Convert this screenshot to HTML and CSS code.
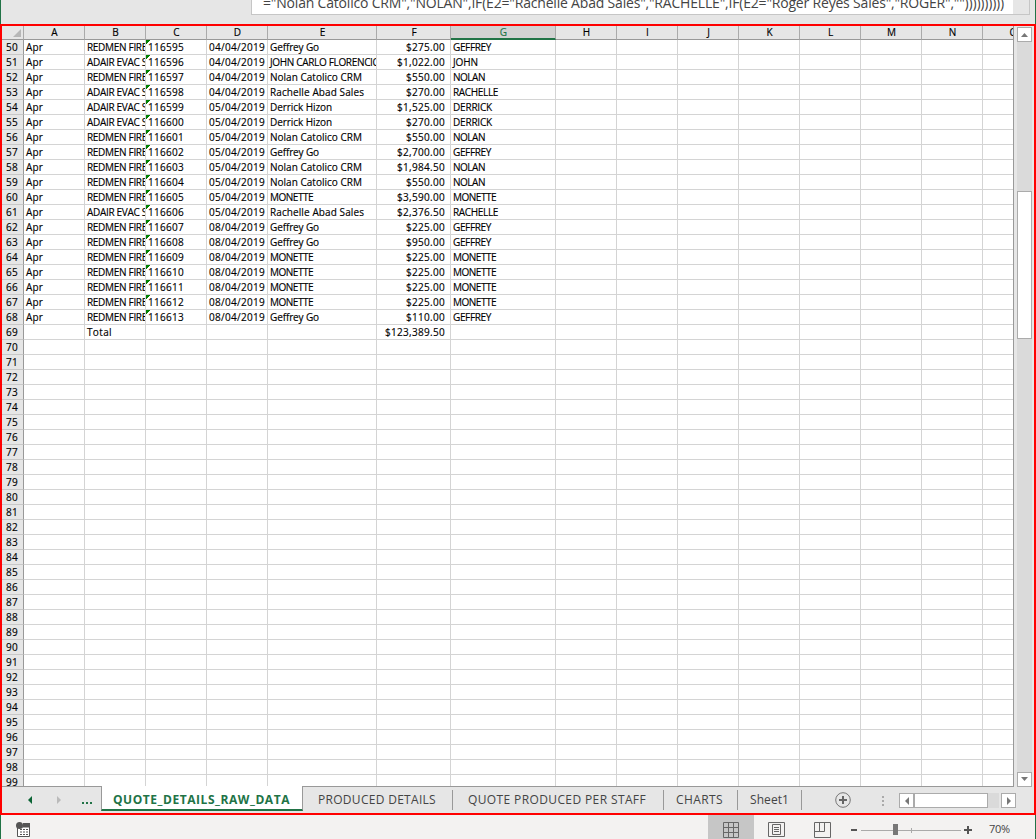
FILE: index.html
```html
<!DOCTYPE html>
<html lang="en">
<head>
<meta charset="utf-8">
<title>Quote details</title>
<link rel="stylesheet" href="styles.css">
</head>
<body>
<div class="app">
  <header class="formula-area"><div class="formula-box"><div class="formula-input"><span class="formula-text" data-w="741">="Nolan Catolico CRM","NOLAN",IF(E2="Rachelle Abad Sales","RACHELLE",IF(E2="Roger Reyes Sales","ROGER",""))))))))))</span></div></div></header>
  <main class="workbook">
    <div class="sheet-area">
      <div class="sheet">
        <div class="row head" id="head"></div>
        <div class="rows" id="rows"></div>
      </div>
      <div class="vscroll">
        <div class="arrow"><svg width="9" height="5"><path d="M1 5L4.500 1L8 5z"/></svg></div>
        <div class="vtrack"><div class="vthumb"></div></div>
        <div class="arrow"><svg width="9" height="5"><path d="M1 0L4.500 4L8 0z"/></svg></div>
      </div>
    </div>
    <nav class="tabs">
      <div class="tabnav">
        <svg width="99" height="26"><path d="M26 13l4-4v8z" fill="#0b6434"/><path d="M59 13l-4-4v8z" fill="#bababa"/><path d="M80 15h2v2h-2zM84 15h2v2h-2zM88 15h2v2h-2z" fill="#217346"/></svg>
      </div>
      <div class="tab active"><span data-w="177">QUOTE_DETAILS_RAW_DATA</span></div>
      <div class="tab t2"><span data-w="118">PRODUCED DETAILS</span></div>
      <div class="tab t3"><span data-w="178">QUOTE PRODUCED PER STAFF</span></div>
      <div class="tab t4"><span data-w="47">CHARTS</span></div>
      <div class="tab t5"><span data-w="39">Sheet1</span></div>
      <div class="tab-tools">
        <svg class="add" width="16" height="16"><circle cx="8" cy="8" r="7.300" fill="none" stroke="#777"/><path d="M8 4v8M4 8h8" stroke="#666" stroke-width="2"/></svg>
        <svg class="dots" width="2" height="10" fill="#aaa"><path d="M0 0h2v2H0zM0 4h2v2H0zM0 8h2v2H0z"/></svg>
        <div class="hscroll"><div class="arrow"><svg width="4" height="8"><path d="M4 0L0 4L4 8z"/></svg></div><div class="hthumb"></div><div class="htrack"></div><div class="arrow"><svg width="4" height="8"><path d="M0 0L4 4L0 8z"/></svg></div></div>
      </div>
    </nav>
  </main>
  <footer class="status">
    <svg class="macro" width="16" height="16"><path d="M1.500 5v9.500h12V5z" fill="#fff" stroke="#555"/><path d="M7 1h7v4H7z" fill="#555"/><circle cx="3.500" cy="3.500" r="3.500" fill="#555"/><path d="M4 7.500h9M4 10h9M4 12.500h9" stroke="#555" stroke-dasharray="2 1"/></svg>
    <div class="view selected"><svg width="16" height="16"><path d="M.500.500h15v15H.500zM5.500 0v16M10.500 0v16M0 5.500h16M0 10.500h16" fill="none" stroke="#666"/></svg></div>
    <div class="view"><svg width="17" height="16"><path d="M.500.500h16v14H.500zM4.500 2.500h8v10h-8zM6 5.500h5M6 7.500h5M6 9.500h5" fill="none" stroke="#666"/></svg></div>
    <div class="view"><svg width="17" height="16"><path d="M.500.500h16v15H.500zM.500 9.500h10V0M5.500 0v9" fill="none" stroke="#666"/></svg></div>
    <svg class="zoom" width="124" height="12"><path d="M0 6h6M113 6h8M117 2v8" stroke="#555" stroke-width="2"/><path d="M10 6.500h100M60.500 4v5" stroke="#aaa"/><path d="M42 0h5v11h-5z" fill="#777"/></svg>
    <span class="percent" data-w="21">70%</span>
  </footer>
</div>
<script src="sheet.js"></script>
</body>
</html>
```
FILE: styles.css
```css
* { box-sizing: border-box; }
body { margin: 0; font-family: "Open Sans", "Noto Sans", sans-serif; }
svg { display: block; flex: none; }
.app { width: 1036px; height: 839px; display: flex; flex-direction: column; overflow: hidden; background: #e6e6e6; }
.formula-area { height: 24px; flex: none; border-left: 1px solid #217346; border-right: 1px solid #217346; padding: 0 5px 0 250px; }
.formula-box { height: 15px; border: 1px solid #c6c6c6; border-top: 0; padding-right: 16px; }
.formula-input { height: 14px; background: #fff; overflow: hidden; display: flex; align-items: flex-end; padding-left: 11px; }
.formula-text { font: 14px/20px "Open Sans", sans-serif; color: #444; white-space: nowrap; margin-bottom: 1px; }
.workbook { height: 791px; flex: none; border: 2px solid #f00; display: flex; flex-direction: column; }
.sheet-area { height: 760px; flex: none; display: flex; }
.sheet { width: 1012px; background: #fff; border-right: 1px solid #999; overflow: hidden; }
.row { display: grid; grid-template-columns: 22px 61px 61px 61px 61px 109px 74px 105px repeat(8, 61px); height: 15px; font-size: 10px; line-height: 15px; color: #000; -webkit-text-stroke: 0.15px; }
.cell { border-right: 1px solid #d4d4d4; border-bottom: 1px solid #d4d4d4; padding-left: 2px; overflow: hidden; white-space: nowrap; height: 15px; }
.cell span, .tab span { display: inline-block; }
.right { text-align: right; padding: 0 2px 0 0; }
.money { padding-right: 5px; }
.flag { background: linear-gradient(135deg, #008000 3px, transparent 3.500px) no-repeat; }
.head { height: 14px; }
.head .cell { height: 14px; line-height: 12px; background: #e6e6e6; border-color: #aaa; border-bottom-color: #999; text-align: center; padding: 0 0 0 1px; }
.head .selected-column { background: #d2d2d2; color: #217346; border-bottom: 2px solid #217346; }
.corner svg { margin: 3px 0 0 10px; fill: #b7b7b7; }
.row .number { background: #e6e6e6; border-right-color: #999; border-bottom-color: #c8c8c8; text-align: center; padding: 0 1px 0 0; }
.vscroll { width: 20px; display: flex; flex-direction: column; align-items: flex-end; padding: 1px 2px 0 0; }
.arrow { width: 15px; height: 15px; flex: none; border: 1px solid #ababab; background: #fff; display: flex; align-items: center; justify-content: center; fill: #777; }
.vtrack { width: 15px; height: 730px; flex: none; background: #dadada; padding-top: 149px; }
.vthumb { height: 148px; background: #fff; border: 1px solid #ababab; }
.tabs { height: 27px; display: flex; flex: none; background: linear-gradient(#999, #999) 0 0 / 1012px 1px no-repeat; padding-top: 1px; }
.tabnav { width: 99px; flex: none; }
.tab { height: 20px; margin-top: 3px; border-right: 1px solid #999; font-size: 12px; line-height: 19px; color: #444; white-space: nowrap; flex: none; }
.tab.active { width: 202px; height: 25px; margin-top: -1px; padding: 4px 0 0 11px; background: #fff; border-left: 1px solid #999; border-bottom: 2px solid #217346; color: #217346; font-weight: 700; }
.t2 { width: 150px; padding-left: 15px; }
.t3 { width: 211px; padding-left: 15px; }
.t4 { width: 74px; padding-left: 12px; }
.t5 { width: 64px; padding-left: 12px; }
.tab-tools { display: flex; padding: 5px 0 0 33px; }
.dots { margin: 4px 0 0 31px; }
.hscroll { display: flex; margin: 1px 0 0 15px; }
.hthumb { width: 74px; height: 15px; background: #fff; border: 1px solid #ababab; }
.htrack { width: 11px; height: 15px; background: #dadada; }
.hscroll .arrow:last-child { margin-left: 2px; }
.status { height: 24px; background: #f3f2f1; border-left: 1px solid #217346; border-right: 1px solid #217346; display: flex; }
.macro { margin: 7px 0 0 15px; }
.view { width: 46px; height: 24px; display: flex; justify-content: flex-start; padding: 7px 0 0 14px; }
.selected { background: #c6c6c6; margin-left: 676px; padding-left: 15px; }
.zoom { margin: 9px 0 0 5px; }
.percent { font-size: 11px; line-height: 15px; color: #444; margin: 6px 0 0 14px; height: 15px; white-space: nowrap; }
```
FILE: sheet.js
```js
const widths = { 'Apr': 17, 'REDMEN FIRE': 60, 'ADAIR EVAC S': 60, 'Geffrey Go': 49, 'JOHN CARLO FLORENCIO': 110, 'Nolan Catolico CRM': 92, 'Rachelle Abad Sales': 94, 'Derrick Hizon': 62, 'MONETTE': 43, 'GEFFREY': 38, 'JOHN': 25, 'NOLAN': 32, 'RACHELLE': 45, 'DERRICK': 39, 'Total': 25 };
const people = { G: ['Geffrey Go', 'GEFFREY'], J: ['JOHN CARLO FLORENCIO', 'JOHN'], N: ['Nolan Catolico CRM', 'NOLAN'], R: ['Rachelle Abad Sales', 'RACHELLE'], D: ['Derrick Hizon', 'DERRICK'], M: ['MONETTE', 'MONETTE'] };
const quotes = [
  ['R', '04', 'G', '275.00'], ['A', '04', 'J', '1,022.00'], ['R', '04', 'N', '550.00'], ['A', '04', 'R', '270.00'],
  ['A', '05', 'D', '1,525.00'], ['A', '05', 'D', '270.00'], ['R', '05', 'N', '550.00'], ['R', '05', 'G', '2,700.00'],
  ['R', '05', 'N', '1,984.50'], ['R', '05', 'N', '550.00'], ['R', '05', 'M', '3,590.00'], ['A', '05', 'R', '2,376.50'],
  ['R', '08', 'G', '225.00'], ['R', '08', 'G', '950.00'], ['R', '08', 'M', '225.00'], ['R', '08', 'M', '225.00'],
  ['R', '08', 'M', '225.00'], ['R', '08', 'M', '225.00'], ['R', '08', 'G', '110.00']
];
function cell(text, cls, width) {
  const w = width || widths[text];
  return `<div class="cell ${cls || ''}">${text ? `<span${w ? ` data-w="${w}"` : ''}>${text}</span>` : ''}</div>`;
}
document.getElementById('head').innerHTML =
  '<div class="cell corner"><svg width="8" height="8"><path d="M8 0v8H0z"/></svg></div>' +
  [...'ABCDEFGHIJKLMNO'].map(c => cell(c, c === 'G' ? 'selected-column' : '')).join('');
let html = '';
for (let n = 50; n < 100; n++) {
  const q = quotes[n - 50];
  html += '<div class="row">' + cell(String(n), 'number', 12);
  if (q) {
    const [person, team] = people[q[2]];
    html += cell('Apr') + cell(q[0] === 'R' ? 'REDMEN FIRE' : 'ADAIR EVAC S') +
      cell(String(116545 + n), 'flag', 36) + cell(q[1] + '/04/2019', 'right', 56) + cell(person) +
      cell('$' + q[3], 'right money', q[3].length > 6 ? 48 : 39) + cell(team);
  } else if (n === 69) {
    html += cell('') + cell('Total') + cell('') + cell('') + cell('') + cell('$123,389.50', 'right money', 60) + cell('');
  } else {
    html += cell('').repeat(7);
  }
  html += cell('').repeat(8) + '</div>';
}
document.getElementById('rows').innerHTML = html;
// Spread the letters of each label over its nominal width.
document.querySelectorAll('[data-w]').forEach(el => {
  const gap = (Number(el.dataset.w) - el.getBoundingClientRect().width) / el.textContent.length;
  el.style.letterSpacing = gap.toFixed(3) + 'px';
});
```
